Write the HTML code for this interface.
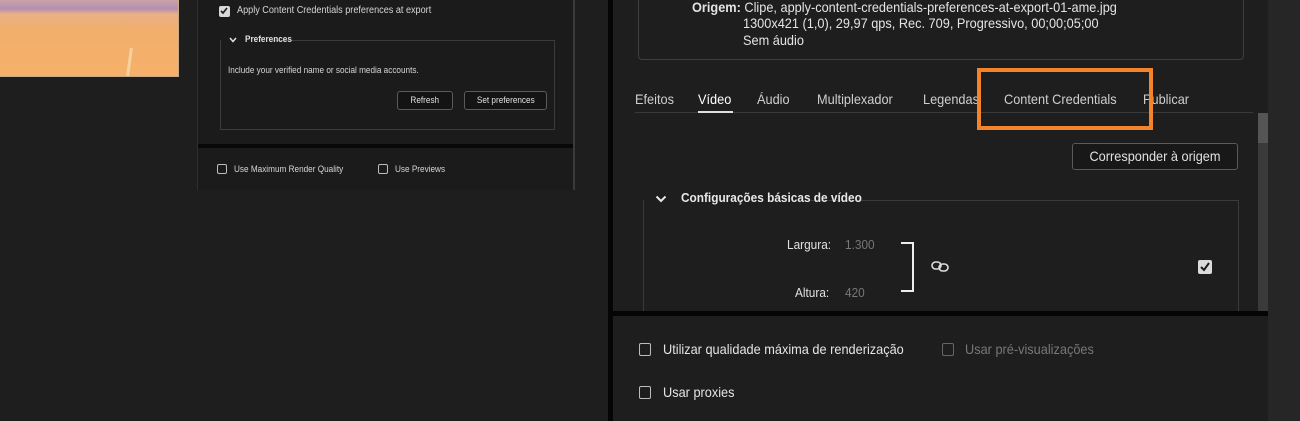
<!DOCTYPE html>
<html><head><meta charset="utf-8"><style>
*{margin:0;padding:0;box-sizing:border-box}
body{width:1300px;height:421px;background:#1e1e1e;position:relative;overflow:hidden;font-family:"Liberation Sans",sans-serif;color:#d6d6d6}
.a{position:absolute}
.t{position:absolute;transform:scaleX(.91);transform-origin:0 0;white-space:nowrap}
.cb{position:absolute;width:11px;height:11px;border:1.5px solid #bdbdbd;border-radius:2px}
.btn{position:absolute;border:1px solid #5a5a5a;border-radius:3px;background:#141414;color:#e0e0e0;text-align:center;white-space:nowrap}
.btn span{display:inline-block;transform:scaleX(.91)}
</style></head><body>
<div class="a" style="left:0;top:0;width:179px;height:77px;background:linear-gradient(180deg,#c9a3a6 0px,#b58fb3 9px,#e8b085 14px,#f2ae6c 30px,#f6b06a 77px);border-right:1px solid #caa88a;border-bottom:1px solid #caa88a"></div>
<div class="a" style="left:128px;top:48px;width:3px;height:28px;background:#f7d2a0;transform:rotate(8deg)"></div>
<div class="a" style="left:197px;top:0;width:378px;height:190px;background:#1b1b1b;border-left:1px solid #2e2e2e;border-right:2px solid #3a3a3a"></div>
<div class="a" style="left:198px;top:144px;width:375px;height:4px;background:#080808"></div>
<div class="cb" style="left:219px;top:6px;background:#d8d8d8;border-color:#d8d8d8"><svg width="8" height="8" style="position:absolute;left:0;top:0" viewBox="0 0 8 8"><path d="M1 4 L3 6 L7 1" stroke="#1b1b1b" stroke-width="1.6" fill="none"/></svg></div>
<div class="t" style="left:237px;top:5px;font-size:10px">Apply Content Credentials preferences at export</div>
<div class="a" style="left:220px;top:40px;width:335px;height:90px;border:1px solid #3c3c3c;border-top:none"></div>
<div class="a" style="left:272px;top:40px;width:283px;height:1px;background:#3c3c3c"></div>
<svg class="a" style="left:229px;top:37px" width="8" height="6" viewBox="0 0 8 6"><path d="M1 1 L4 4.5 L7 1" stroke="#e0e0e0" stroke-width="1.5" fill="none"/></svg>
<div class="t" style="left:245px;top:34px;font-size:9px;font-weight:bold;color:#e0e0e0">Preferences</div>
<div class="t" style="left:228px;top:65px;font-size:9px">Include your verified name or social media accounts.</div>
<div class="btn" style="left:397px;top:91px;width:56px;height:19px;font-size:9px;line-height:17px"><span>Refresh</span></div>
<div class="btn" style="left:464px;top:91px;width:83px;height:19px;font-size:9px;line-height:17px"><span>Set preferences</span></div>
<div class="cb" style="left:217px;top:164px;width:10px;height:10px"></div>
<div class="t" style="left:234px;top:164px;font-size:9px">Use Maximum Render Quality</div>
<div class="cb" style="left:378px;top:164px;width:10px;height:10px"></div>
<div class="t" style="left:395px;top:164px;font-size:9px">Use Previews</div>
<div class="a" style="left:608px;top:0;width:5px;height:421px;background:#050505"></div>
<div class="a" style="left:1268px;top:0;width:32px;height:421px;background:#262626"></div>
<div class="a" style="left:638px;top:-8px;width:606px;height:68px;border:1px solid #3e3e3e;border-radius:4px"></div>
<div class="t" style="left:692px;top:-1px;font-size:14px;line-height:17px;color:#e4e4e4"><b>Origem:</b> Clipe, apply-content-credentials-preferences-at-export-01-ame.jpg</div>
<div class="t" style="left:743px;top:15px;font-size:14px;line-height:17px;color:#e4e4e4">1300x421 (1,0), 29,97 qps, Rec. 709, Progressivo, 00;00;05;00</div>
<div class="t" style="left:743px;top:32px;font-size:14px;line-height:17px;color:#e4e4e4">Sem áudio</div>
<div class="t" style="left:635px;top:91px;font-size:14px;color:#cfcfcf">Efeitos</div>
<div class="t" style="left:698px;top:91px;font-size:14px;color:#fff">Vídeo</div>
<div class="t" style="left:757px;top:91px;font-size:14px;color:#cfcfcf">Áudio</div>
<div class="t" style="left:817px;top:91px;font-size:14px;color:#cfcfcf">Multiplexador</div>
<div class="t" style="left:923px;top:91px;font-size:14px;color:#cfcfcf">Legendas</div>
<div class="t" style="left:1004px;top:91px;font-size:14px;color:#cfcfcf">Content Credentials</div>
<div class="t" style="left:1143px;top:91px;font-size:14px;color:#cfcfcf">Publicar</div>
<div class="a" style="left:635px;top:112px;width:618px;height:1px;background:#3a3a3a"></div>
<div class="a" style="left:698px;top:111px;width:35px;height:2px;background:#e0e0e0"></div>
<div class="a" style="left:977px;top:68px;width:176px;height:62px;border:4px solid #f5832a"></div>
<div class="a" style="left:1258px;top:113px;width:10px;height:198px;background:#3a3a3a"></div>
<div class="a" style="left:1258px;top:113px;width:10px;height:30px;background:#555"></div>
<div class="btn" style="left:1072px;top:143px;width:166px;height:27px;font-size:14px;line-height:25px;background:#181818"><span>Corresponder à origem</span></div>
<div class="a" style="left:643px;top:200px;width:596px;height:112px;border:1px solid #3a3a3a;border-top:none;border-bottom:none"></div>
<div class="a" style="left:808px;top:200px;width:431px;height:1px;background:#3a3a3a"></div>
<svg class="a" style="left:655px;top:195px" width="12" height="8" viewBox="0 0 12 8"><path d="M1.5 1.5 L6 6 L10.5 1.5" stroke="#e8e8e8" stroke-width="2" fill="none"/></svg>
<div class="t" style="left:681px;top:190px;font-size:13px;font-weight:bold;color:#e8e8e8">Configurações básicas de vídeo</div>
<div class="t" style="left:787px;top:237px;font-size:13px;color:#e0e0e0">Largura:</div>
<div class="t" style="left:845px;top:237px;font-size:13px;color:#777">1.300</div>
<div class="t" style="left:795px;top:285px;font-size:13px;color:#e0e0e0">Altura:</div>
<div class="t" style="left:845px;top:285px;font-size:13px;color:#777">420</div>
<div class="a" style="left:901px;top:242px;width:13px;height:50px;border:2px solid #eee;border-left:none"></div>
<svg class="a" style="left:931px;top:261px" width="18" height="11" viewBox="0 0 18 11"><rect x="1" y="1" width="9" height="7" rx="3.5" stroke="#ddd" stroke-width="1.6" fill="none"/><rect x="8" y="3" width="9" height="7" rx="3.5" stroke="#ddd" stroke-width="1.6" fill="none"/></svg>
<div class="a" style="left:1198px;top:260px;width:14px;height:14px;background:#dcdcdc;border-radius:2px"><svg width="14" height="14" viewBox="0 0 14 14"><path d="M3 7 L6 10 L11 3" stroke="#1e1e1e" stroke-width="2" fill="none"/></svg></div>
<div class="a" style="left:613px;top:311px;width:655px;height:5px;background:#050505"></div>
<div class="cb" style="left:639px;top:343px;width:12px;height:13px"></div>
<div class="t" style="left:663px;top:341px;font-size:14px;color:#e4e4e4">Utilizar qualidade máxima de renderização</div>
<div class="cb" style="left:942px;top:343px;width:12px;height:13px;border-color:#666"></div>
<div class="t" style="left:965px;top:341px;font-size:14px;color:#777">Usar pré-visualizações</div>
<div class="cb" style="left:639px;top:386px;width:12px;height:13px"></div>
<div class="t" style="left:663px;top:384px;font-size:14px;color:#e4e4e4">Usar proxies</div>
</body></html>
